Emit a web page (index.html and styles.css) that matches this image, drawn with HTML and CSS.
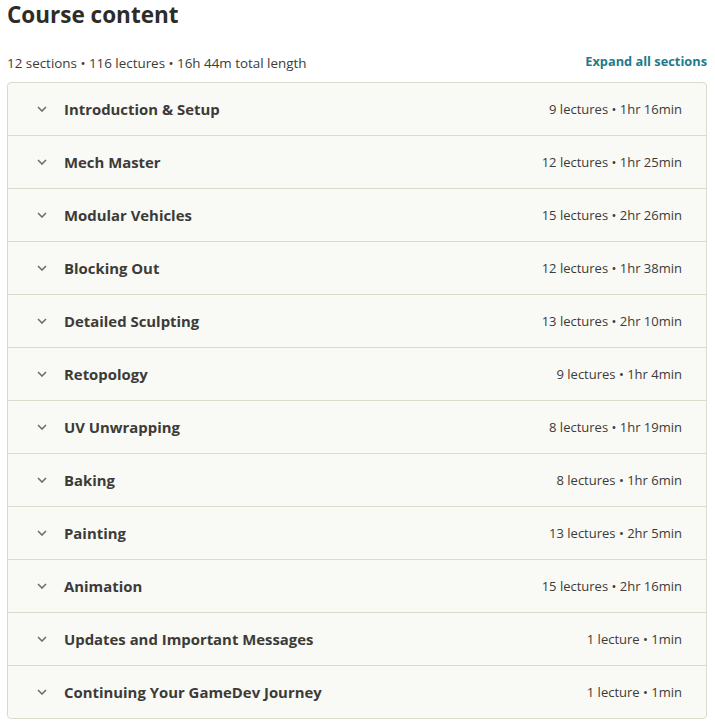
FILE: index.html
```html
<!DOCTYPE html>
<html lang="en">
<head>
  <meta charset="UTF-8">
  <meta name="viewport" content="width=device-width, initial-scale=1.0">
  <title>Course content</title>
  <link rel="stylesheet" href="styles.css">
</head>
<body>
  <div class="curriculum">
    <h2>Course content</h2>

    <div class="summary">
      <span>12 sections • 116 lectures • 16h 44m total length</span>
      <button class="expand">Expand all sections</button>
    </div>

    <div class="sections">
      <div class="section">
        <svg class="chevron" viewBox="0 0 10 6"><path d="M1 1l4 4 4-4"/></svg>
        <span class="title">Introduction &amp; Setup</span>
        <span class="meta">9 lectures • 1hr 16min</span>
      </div>
      <div class="section">
        <svg class="chevron" viewBox="0 0 10 6"><path d="M1 1l4 4 4-4"/></svg>
        <span class="title">Mech Master</span>
        <span class="meta">12 lectures • 1hr 25min</span>
      </div>
      <div class="section">
        <svg class="chevron" viewBox="0 0 10 6"><path d="M1 1l4 4 4-4"/></svg>
        <span class="title">Modular Vehicles</span>
        <span class="meta">15 lectures • 2hr 26min</span>
      </div>
      <div class="section">
        <svg class="chevron" viewBox="0 0 10 6"><path d="M1 1l4 4 4-4"/></svg>
        <span class="title">Blocking Out</span>
        <span class="meta">12 lectures • 1hr 38min</span>
      </div>
      <div class="section">
        <svg class="chevron" viewBox="0 0 10 6"><path d="M1 1l4 4 4-4"/></svg>
        <span class="title">Detailed Sculpting</span>
        <span class="meta">13 lectures • 2hr 10min</span>
      </div>
      <div class="section">
        <svg class="chevron" viewBox="0 0 10 6"><path d="M1 1l4 4 4-4"/></svg>
        <span class="title">Retopology</span>
        <span class="meta">9 lectures • 1hr 4min</span>
      </div>
      <div class="section">
        <svg class="chevron" viewBox="0 0 10 6"><path d="M1 1l4 4 4-4"/></svg>
        <span class="title">UV Unwrapping</span>
        <span class="meta">8 lectures • 1hr 19min</span>
      </div>
      <div class="section">
        <svg class="chevron" viewBox="0 0 10 6"><path d="M1 1l4 4 4-4"/></svg>
        <span class="title">Baking</span>
        <span class="meta">8 lectures • 1hr 6min</span>
      </div>
      <div class="section">
        <svg class="chevron" viewBox="0 0 10 6"><path d="M1 1l4 4 4-4"/></svg>
        <span class="title">Painting</span>
        <span class="meta">13 lectures • 2hr 5min</span>
      </div>
      <div class="section">
        <svg class="chevron" viewBox="0 0 10 6"><path d="M1 1l4 4 4-4"/></svg>
        <span class="title">Animation</span>
        <span class="meta">15 lectures • 2hr 16min</span>
      </div>
      <div class="section">
        <svg class="chevron" viewBox="0 0 10 6"><path d="M1 1l4 4 4-4"/></svg>
        <span class="title">Updates and Important Messages</span>
        <span class="meta">1 lecture • 1min</span>
      </div>
      <div class="section">
        <svg class="chevron" viewBox="0 0 10 6"><path d="M1 1l4 4 4-4"/></svg>
        <span class="title">Continuing Your GameDev Journey</span>
        <span class="meta">1 lecture • 1min</span>
      </div>
    </div>
  </div>
</body>
</html>
```

FILE: styles.css
```css
body {
  margin: 0;
  background-color: #fff;
  font-family: "Open Sans", "Noto Sans", sans-serif;
  color: #3c3b37;
}
.curriculum {
  padding: 0 8px 0 7px;
}
h2 {
  margin: 0;
  padding-top: 1px;
  font-size: 22.5px;
  line-height: 28px;
  font-weight: 700;
  color: #2d2c28;
}
.summary {
  display: flex;
  justify-content: space-between;
  align-items: center;
  margin-top: 20px;
  height: 27px;
  font-size: 13.4px;
}
.expand {
  background: none;
  border: none;
  padding: 0;
  font-family: inherit;
  font-size: 12.8px;
  font-weight: 700;
  color: #1e7b8b;
  cursor: pointer;
  margin-top: -3px;
}
.sections {
  margin-top: 6px;
  border: 1px solid #dcdacb;
  border-radius: 4px;
  overflow: hidden;
  background-color: #f9f9f6;
}
.section {
  display: flex;
  align-items: center;
  height: 52px;
  padding: 0 24px 0 29px;
  border-top: 1px solid #dcdacb;
}
.section:first-child {
  border-top: none;
}
.chevron {
  width: 10px;
  height: 6px;
  fill: none;
  stroke: #6a6f73;
  stroke-width: 1.6;
  margin-right: 17px;
}
.title {
  flex: 1;
  font-size: 14.9px;
  font-weight: 700;
  color: #3c3b37;
}
.meta {
  font-size: 13px;
  color: #3c3b37;
}
```
